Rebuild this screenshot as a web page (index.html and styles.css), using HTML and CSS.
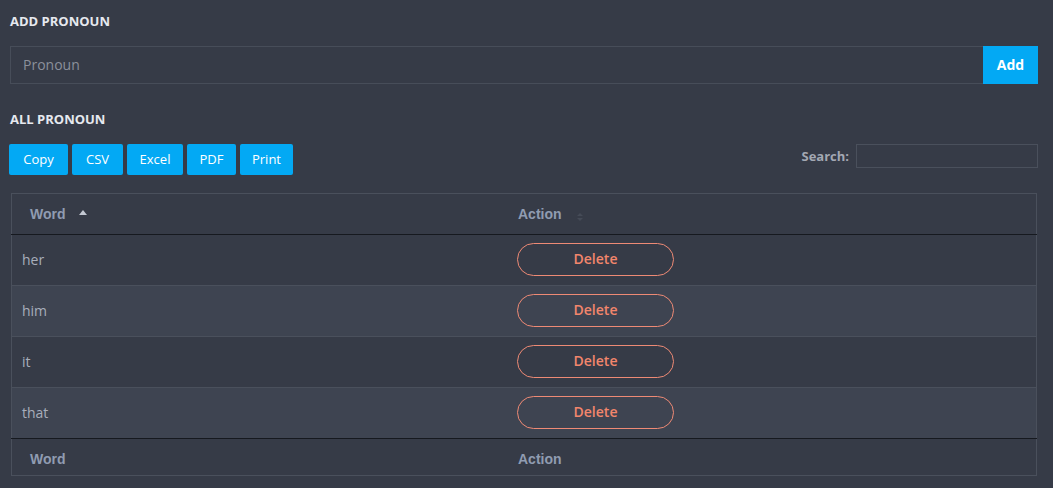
FILE: index.html
```html
<!DOCTYPE html>
<html>
<head>
<meta charset="utf-8">
<link rel="stylesheet" href="styles.css">
</head>
<body>
<div class="page">
  <h3 class="title">ADD PRONOUN</h3>
  <div class="add-row">
    <input class="add-input" type="text" placeholder="Pronoun">
    <button class="add-btn">Add</button>
  </div>
  <h3 class="title title-all">ALL PRONOUN</h3>
  <div class="toolbar">
    <div class="exports">
      <button class="exp">Copy</button>
      <button class="exp">CSV</button>
      <button class="exp">Excel</button>
      <button class="exp">PDF</button>
      <button class="exp">Print</button>
    </div>
    <label class="search">Search: <input class="search-input" type="text"></label>
  </div>
  <table class="grid">
    <thead>
      <tr>
        <th class="c-word">Word <span class="sort-up"></span></th>
        <th class="c-action">Action <span class="sort-both"><span class="su"></span><span class="sd"></span></span></th>
      </tr>
    </thead>
    <tbody>
      <tr><td class="w">her</td><td class="a"><button class="del">Delete</button></td></tr>
      <tr class="alt"><td class="w">him</td><td class="a"><button class="del">Delete</button></td></tr>
      <tr><td class="w">it</td><td class="a"><button class="del">Delete</button></td></tr>
      <tr class="alt"><td class="w">that</td><td class="a"><button class="del">Delete</button></td></tr>
    </tbody>
    <tfoot>
      <tr><th class="c-word">Word</th><th class="c-action">Action</th></tr>
    </tfoot>
  </table>
</div>
</body>
</html>
```

FILE: styles.css
```css
html, body {
  margin: 0;
  padding: 0;
  background: #363b47;
}
body {
  font-family: "Open Sans", "Liberation Sans", sans-serif;
  color: #c9ced8;
}
.page {
  padding: 12px 15px 0 10px;
  width: 1028px;
}
.title {
  margin: 0;
  font-size: 13px;
  font-weight: 700;
  color: #e6e9ef;
  line-height: 18px;
  letter-spacing: 0;
}
.add-row {
  display: flex;
  margin-top: 16px;
  height: 38px;
}
.add-input {
  flex: 1;
  box-sizing: border-box;
  height: 38px;
  margin: 0;
  background: transparent;
  border: 1px solid #474d59;
  border-right: none;
  padding: 0 12px 2px;
  font-family: inherit;
  font-size: 14px;
  color: #c9ced8;
  outline: none;
}
.add-input::placeholder { color: #8b909b; }
.add-btn {
  width: 55px;
  height: 38px;
  border: none;
  margin: 0;
  background: #03a9f4;
  color: #fff;
  font-family: inherit;
  font-weight: 700;
  font-size: 14px;
  padding: 0 0 2px;
}
.title-all {
  margin-top: 26px;
}
.toolbar {
  display: flex;
  justify-content: space-between;
  align-items: flex-start;
  margin-top: 16px;
}
.exports {
  display: flex;
  gap: 4px;
  margin-left: -1px;
}
.exp {
  height: 31px;
  border: none;
  border-radius: 2px;
  background: #03a9f4;
  color: #fff;
  font-family: inherit;
  font-size: 13px;
  padding: 0 0 1px;
  margin: 0;
}
.exp:nth-child(1) { width: 59px; }
.exp:nth-child(2) { width: 51px; }
.exp:nth-child(3) { width: 56px; }
.exp:nth-child(4) { width: 49px; }
.exp:nth-child(5) { width: 53px; }
.search {
  display: flex;
  align-items: center;
  gap: 7px;
  font-size: 13px;
  font-weight: 700;
  color: #a3a8b3;
  margin-right: 0;
}
.search-input {
  box-sizing: border-box;
  width: 182px;
  height: 24px;
  background: transparent;
  border: 1px solid #4a505c;
  margin: 0;
  outline: none;
}
.grid {
  margin-top: 18px;
  margin-left: 1px;
  width: 1026px;
  border-collapse: collapse;
  border: 1px solid #4a505c;
}
.grid th {
  text-align: left;
  font-family: "Liberation Sans", "Open Sans", sans-serif;
  font-weight: 700;
  font-size: 14px;
  color: #909cb1;
  padding: 0;
}
.grid thead th {
  height: 39px;
  border-bottom: 1px solid #16191f;
  vertical-align: middle;
  padding-bottom: 1px;
}
.grid tfoot th {
  height: 33px;
  padding-top: 3px;
  border-top: 1px solid #16191f;
}
.grid th.c-word { width: 477px; padding-left: 18px; }
.grid th.c-action { padding-left: 11px; }
.sort-up {
  display: inline-block;
  width: 0; height: 0;
  border-left: 4px solid transparent;
  border-right: 4px solid transparent;
  border-bottom: 5px solid #c3c8d2;
  margin-left: 10px;
  vertical-align: 4px;
}
.sort-both {
  display: inline-flex;
  flex-direction: column;
  gap: 2px;
  margin-left: 12px;
  vertical-align: 3px;
}
.su, .sd {
  width: 0; height: 0;
  border-left: 3px solid transparent;
  border-right: 3px solid transparent;
}
.su { border-bottom: 3px solid #454b57; }
.sd { border-top: 3px solid #454b57; }
.grid td {
  height: 48px;
  padding: 0 0 2px;
  border-bottom: 1px solid #4a505c;
  font-size: 14px;
  color: #a8aebb;
  vertical-align: middle;
}
.grid tbody tr:last-child td { border-bottom: none; }
.grid td.w { padding-left: 10px; }
.grid td.a { padding-left: 10px; }
.grid tr.alt td { background: #3e4451; }
.del {
  width: 157px;
  height: 33px;
  border: 1px solid #ee8a75;
  border-radius: 17px;
  background: transparent;
  color: #f2866c;
  font-family: inherit;
  font-size: 14px;
  font-weight: 600;
  margin: 0;
  padding: 0 0 2px;
  display: block;
}
```
